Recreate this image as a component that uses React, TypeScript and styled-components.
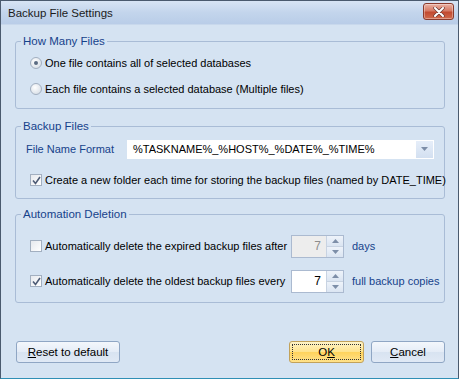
import React from 'react';
import styled, { createGlobalStyle } from 'styled-components';

const Global = createGlobalStyle`
  html, body {
    margin: 0;
    padding: 0;
    background: #d5e3f2;
  }
  * {
    box-sizing: border-box;
  }
`;

const Window = styled.div`
  width: 459px;
  height: 379px;
  display: flex;
  flex-direction: column;
  background: #d5e3f2;
  border: 1px solid #4a5a6e;
  border-bottom-color: #2f8fb5;
  font-family: Tahoma, 'Liberation Sans', Arial, sans-serif;
  font-size: 11px;
  color: #000;
  overflow: hidden;
`;

const TitleBar = styled.div`
  height: 24px;
  flex: none;
  display: flex;
  align-items: center;
  justify-content: space-between;
  padding: 0 4px 0 7px;
  background: linear-gradient(#d7e4f4, #c3d5ec 50%, #b9cde8);
  border-bottom: 1px solid #c8d8ec;
`;

const TitleText = styled.div`
  font-size: 11.5px;
  color: #1b1b1b;
`;

const CloseButton = styled.div`
  width: 31px;
  height: 17px;
  margin-top: -2px;
  display: flex;
  align-items: center;
  justify-content: center;
  border: 1px solid #8a3a2c;
  border-radius: 3px;
  background: linear-gradient(#eab2a4, #d67a64 45%, #c24a30 55%, #d06a4c);
  box-shadow: inset 0 0 0 1px rgba(255, 255, 255, 0.35);
`;

const Body = styled.div`
  flex: 1;
  display: flex;
  flex-direction: column;
  padding: 9px 13px 0 14px;
`;

const Group = styled.fieldset<{ $height: number; $gap?: number }>`
  margin: 0 0 ${(p) => p.$gap ?? 0}px 0;
  padding: 0;
  min-width: 0;
  height: ${(p) => p.$height}px;
  flex: none;
  border: 1px solid #a9bcd6;
  border-radius: 3px;
  display: flex;
  flex-direction: column;
`;

const Legend = styled.legend`
  margin-left: 5px;
  padding: 0 2px;
  color: #15428b;
  font-size: 11.5px;
  line-height: 14px;
`;

const Row = styled.div<{ $top: number }>`
  display: flex;
  align-items: center;
  margin-top: ${(p) => p.$top}px;
  padding-left: 14px;
  height: 22px;
  flex: none;
`;

const Radio = styled.span<{ $checked?: boolean }>`
  width: 12px;
  height: 12px;
  border-radius: 50%;
  border: 1px solid #a2afc0;
  background: radial-gradient(circle at 40% 35%, #ffffff, #dde3ea 70%, #c4ccd6);
  margin-right: 3px;
  display: flex;
  align-items: center;
  justify-content: center;
  &::after {
    content: '';
    display: ${(p) => (p.$checked ? 'block' : 'none')};
    width: 4px;
    height: 4px;
    border-radius: 50%;
    background: #5a6b82;
  }
`;

const Check = styled.span`
  width: 12px;
  height: 12px;
  flex: none;
  border: 1px solid #a2afc0;
  background: linear-gradient(135deg, #e6e9ee, #ffffff);
  margin-right: 3px;
  display: flex;
  align-items: center;
  justify-content: center;
`;

const Label = styled.span<{ $width?: number }>`
  white-space: nowrap;
  width: ${(p) => (p.$width ? `${p.$width}px` : 'auto')};
  flex: none;
`;

const FormatLabel = styled.span`
  color: #15428b;
  width: 101px;
  margin-left: -4px;
`;

const Combo = styled.div`
  width: 307px;
  height: 19px;
  display: flex;
  align-items: center;
  background: #fff;
  border: 1px solid #fff;
`;

const ComboText = styled.div`
  flex: 1;
  padding-left: 5px;
`;

const ComboButton = styled.div`
  width: 17px;
  height: 17px;
  display: flex;
  align-items: center;
  justify-content: center;
  background: linear-gradient(#e6eef9, #d3e0f1);
`;

const Spin = styled.div<{ $disabled?: boolean }>`
  width: 53px;
  height: 23px;
  flex: none;
  display: flex;
  border: 1px solid #abbad0;
  background: ${(p) => (p.$disabled ? '#ededed' : '#fff')};
  color: ${(p) => (p.$disabled ? '#8d8d8d' : '#000')};
`;

const SpinValue = styled.div`
  flex: 1;
  display: flex;
  align-items: center;
  justify-content: flex-end;
  padding-right: 5px;
  font-size: 12px;
`;

const SpinButtons = styled.div`
  width: 17px;
  display: flex;
  flex-direction: column;
  border-left: 1px solid #c8d3e2;
`;

const SpinArrow = styled.div`
  flex: 1;
  display: flex;
  align-items: center;
  justify-content: center;
  background: linear-gradient(#eef3fa, #dbe5f2);
  & + & {
    border-top: 1px solid #c8d3e2;
  }
`;

const SpinLabel = styled.span`
  color: #15428b;
  margin-left: 8px;
  white-space: nowrap;
`;

const Footer = styled.div`
  display: flex;
  align-items: center;
  margin-top: 38px;
  padding-left: 1px;
`;

const Button = styled.div<{ $width: number; $default?: boolean }>`
  width: ${(p) => p.$width}px;
  height: 22px;
  display: flex;
  align-items: center;
  justify-content: center;
  border-radius: 3px;
  border: 1px solid ${(p) => (p.$default ? '#c2a25a' : '#8fa6c4')};
  background: ${(p) =>
    p.$default
      ? 'linear-gradient(#fff4c8, #ffe38a 50%, #ffd35c 51%, #ffe28a)'
      : 'linear-gradient(#f3f7fc, #e4ecf7 50%, #d8e3f1 51%, #e0e9f5)'};
  color: #000;
  font-size: 11.5px;
  position: relative;
  & + & {
    margin-left: 7px;
  }
`;

const Focus = styled.span`
  position: absolute;
  inset: 2px;
  border: 1px dotted #333;
`;

const Spacer = styled.div`
  flex: 1;
`;

function SmallArrow(props: { up?: boolean }) {
  return (
    <svg width="7" height="4" viewBox="0 0 7 4">
      <path d={props.up ? 'M0 4 L3.5 0 L7 4 Z' : 'M0 0 L3.5 4 L7 0 Z'} fill="#7d8ea8" />
    </svg>
  );
}

function SpinBox(props: { value: string; disabled?: boolean }) {
  return (
    <Spin $disabled={props.disabled}>
      <SpinValue>{props.value}</SpinValue>
      <SpinButtons>
        <SpinArrow>
          <SmallArrow up />
        </SpinArrow>
        <SpinArrow>
          <SmallArrow />
        </SpinArrow>
      </SpinButtons>
    </Spin>
  );
}

function CheckMark() {
  return (
    <svg width="9" height="9" viewBox="0 0 9 9">
      <path d="M1 4.5 L3.5 7.5 L8 1" fill="none" stroke="#4d5b75" strokeWidth="1.6" />
    </svg>
  );
}

export default function App() {
  return (
    <>
      <Global />
      <Window>
        <TitleBar>
          <TitleText>Backup File Settings</TitleText>
          <CloseButton>
            <svg width="12" height="10" viewBox="0 0 12 10">
              <path d="M2 1 L10 9 M10 1 L2 9" stroke="#6b3a34" strokeWidth="3.4" strokeLinecap="round" />
              <path d="M2 1 L10 9 M10 1 L2 9" stroke="#ffffff" strokeWidth="2" strokeLinecap="round" />
            </svg>
          </CloseButton>
        </TitleBar>
        <Body>
          <Group $height={75} $gap={10}>
            <Legend>How Many Files</Legend>
            <Row $top={4}>
              <Radio $checked />
              <Label>One file contains all of selected databases</Label>
            </Row>
            <Row $top={4}>
              <Radio />
              <Label>Each file contains a selected database (Multiple files)</Label>
            </Row>
          </Group>
          <Group $height={80} $gap={8}>
            <Legend>Backup Files</Legend>
            <Row $top={5}>
              <FormatLabel>File Name Format</FormatLabel>
              <Combo>
                <ComboText>%TASKNAME%_%HOST%_%DATE%_%TIME%</ComboText>
                <ComboButton>
                  <SmallArrow />
                </ComboButton>
              </Combo>
            </Row>
            <Row $top={9}>
              <Check>
                <CheckMark />
              </Check>
              <Label>Create a new folder each time for storing the backup files (named by DATE_TIME)</Label>
            </Row>
          </Group>
          <Group $height={96}>
            <Legend>Automation Deletion</Legend>
            <Row $top={14}>
              <Check />
              <Label $width={246}>Automatically delete the expired backup files after</Label>
              <SpinBox value="7" disabled />
              <SpinLabel>days</SpinLabel>
            </Row>
            <Row $top={13}>
              <Check>
                <CheckMark />
              </Check>
              <Label $width={246}>Automatically delete the oldest backup files every</Label>
              <SpinBox value="7" />
              <SpinLabel>full backup copies</SpinLabel>
            </Row>
          </Group>
          <Footer>
            <Button $width={104}>
              <span>
                <u>R</u>eset to default
              </span>
            </Button>
            <Spacer />
            <Button $width={75} $default>
              <Focus />
              <span>
                O<u>K</u>
              </span>
            </Button>
            <Button $width={74}>
              <span>
                <u>C</u>ancel
              </span>
            </Button>
          </Footer>
        </Body>
      </Window>
    </>
  );
}
